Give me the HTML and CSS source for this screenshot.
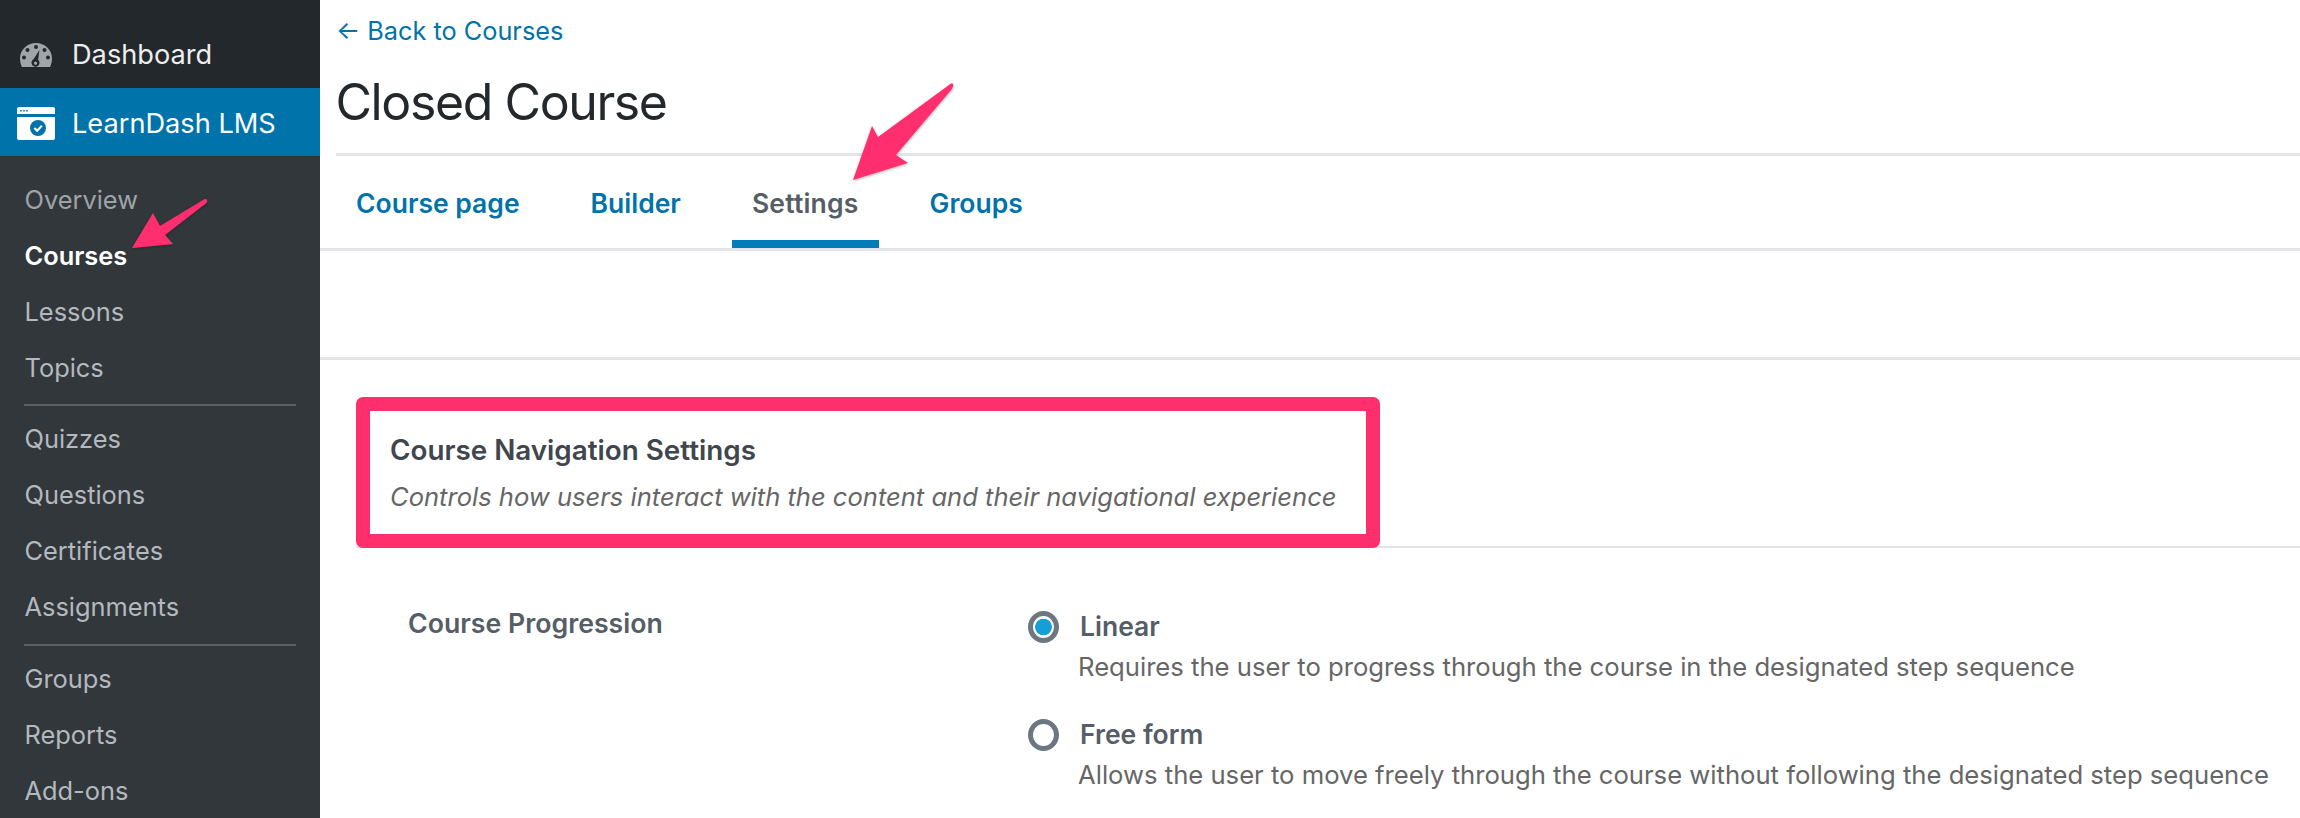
FILE: index.html
```html
<!DOCTYPE html>
<html lang="en">
<head>
<meta charset="utf-8">
<title>Closed Course</title>
<link rel="stylesheet" href="styles.css">
</head>
<body>
<div class="page">
  <aside class="sidebar">
    <a class="top-item dashboard">
      <svg class="dash-icon" viewBox="0 0 32 24"><path fill-rule="evenodd" d="M16 0C7.200 0 0 6.600 0 15.500c0 3.300.8 6.200 2 8.500h28c1.200-2.300 2-5.200 2-8.500C32 6.600 24.800 0 16 0zM16 2a2 2 0 1 1 0 4 2 2 0 0 1 0-4zM7.500 5a2 2 0 1 1 0 4 2 2 0 0 1 0-4zM24.500 5a2 2 0 1 1 0 4 2 2 0 0 1 0-4zM4 12.500a2 2 0 1 1 0 4 2 2 0 0 1 0-4zM28 12.500a2 2 0 1 1 0 4 2 2 0 0 1 0-4zM19.500 7l-1.400 9.700a4 4 0 1 1-4.600-.4zM15.500 18.500a1.600 1.600 0 1 0 .1 3.200 1.600 1.600 0 0 0-.1-3.200z"/></svg>
      <span>Dashboard</span>
    </a>
    <a class="top-item learndash">
      <svg class="ld-icon" viewBox="0 0 38 33"><path fill="#fff" d="M2 0h34a2 2 0 0 1 2 2v5H0V2a2 2 0 0 1 2-2zM0 10h38v21a2 2 0 0 1-2 2H2a2 2 0 0 1-2-2z"/><circle cx="4" cy="3.700" r=".9" fill="#0073aa"/><circle cx="7" cy="3.700" r=".9" fill="#0073aa"/><circle cx="10" cy="3.700" r=".9" fill="#0073aa"/><circle cx="21" cy="21" r="8" fill="#0073aa"/><path fill="none" stroke="#fff" stroke-width="2" d="M17.300 21l2.800 2.800 4.800-5"/></svg>
      <span>LearnDash LMS</span>
    </a>
    <nav class="submenu">
      <a class="sub-item dim">Overview</a>
      <a class="sub-item current">Courses</a>
      <a class="sub-item">Lessons</a>
      <a class="sub-item">Topics</a>
      <div class="sub-divider"></div>
      <a class="sub-item">Quizzes</a>
      <a class="sub-item">Questions</a>
      <a class="sub-item">Certificates</a>
      <a class="sub-item">Assignments</a>
      <div class="sub-divider"></div>
      <a class="sub-item">Groups</a>
      <a class="sub-item">Reports</a>
      <a class="sub-item">Add-ons</a>
    </nav>
  </aside>
  <main class="content">
    <header class="course-head">
      <a class="back-link">← Back to Courses</a>
      <h1 class="course-title">Closed Course</h1>
    </header>
    <nav class="tabs">
      <a class="tab">Course page</a>
      <a class="tab">Builder</a>
      <a class="tab active">Settings</a>
      <a class="tab">Groups</a>
    </nav>
    <div class="notice-gap"></div>
    <section class="settings">
      <div class="section-head">
        <div class="section-box">
          <h2 class="section-title">Course Navigation Settings</h2>
          <p class="section-desc">Controls how users interact with the content and their navigational experience</p>
        </div>
      </div>
      <div class="field">
        <div class="field-label">Course Progression</div>
        <div class="field-options">
          <div class="option">
            <span class="radio checked"></span>
            <div class="option-text">
              <div class="option-name">Linear</div>
              <div class="option-desc">Requires the user to progress through the course in the designated step sequence</div>
            </div>
          </div>
          <div class="option">
            <span class="radio"></span>
            <div class="option-text">
              <div class="option-name">Free form</div>
              <div class="option-desc">Allows the user to move freely through the course without following the designated step sequence</div>
            </div>
          </div>
        </div>
      </div>
    </section>
  </main>
  <svg class="annotations" viewBox="0 0 2300 818">
    <defs>
      <filter id="arrow-shadow" x="-20%" y="-20%" width="140%" height="140%"><feDropShadow dx="0" dy="1" stdDeviation="1.500" flood-color="#000" flood-opacity=".3"/></filter>
    </defs>
    <path class="arrow" filter="url(#arrow-shadow)" d="M132 248L153 213 160 226 203 200Q206 198 207 200 208 202 205 204L165 235 173 244z"/>
    <path class="arrow" filter="url(#arrow-shadow)" d="M853 180L872 126 878 137 949 85Q952 82 953 84 954 86 952 89L896 155 908 163z"/>
  </svg>
</div>
</body>
</html>
```
FILE: styles.css
```css
* { box-sizing: border-box; }
html, body { margin: 0; height: 100%; background: #fff; }
body { font-family: Inter, "Liberation Sans", sans-serif; overflow: hidden; }
a { display: block; }
.page { position: relative; display: flex; width: 2300px; height: 818px; overflow: hidden; }

.sidebar { flex: 0 0 320px; background: #32373c; color: #b4b9be; }
.top-item { display: flex; align-items: center; font-size: 27.200px; }
.top-item span { line-height: 1; }
.dashboard { height: 88px; padding: 21px 0 0 20px; background: #23282d; color: #eee; gap: 20px; }
.learndash { height: 68px; padding: 3px 0 0 17px; background: #0073aa; color: #fff; gap: 17px; }
.dash-icon { flex: none; width: 32px; height: 24px; fill: #a0a5aa; }
.ld-icon { flex: none; width: 38px; height: 33px; }
.submenu { padding-top: 15.500px; }
.sub-item { height: 56px; line-height: 56px; padding-left: 24.500px; font-size: 25.400px; color: #b4b9be; }
.sub-item.dim { color: #9ea3a8; }
.sub-item.current { color: #fff; font-weight: 600; }
.sub-divider { height: 2px; margin: 8.500px 24px 5px; background: #5c6166; }

.content { flex: 1; min-width: 0; color: #23282d; }
.course-head { margin-left: 16px; height: 156px; border-bottom: 3px solid #e2e4e7; padding-top: 16px; }
.back-link { font-size: 25.300px; line-height: 30px; color: #0073aa; }
.course-title { margin: 27px 0 0 -.5px; font-size: 50px; line-height: 58px; font-weight: 400; letter-spacing: -1.400px; color: #23282d; }
.tabs { display: flex; height: 95px; border-bottom: 3px solid #e2e4e7; padding-left: 16px; }
.tab { height: 92px; padding: 0 20px; line-height: 94px; font-size: 26.500px; font-weight: 600; color: #0073aa; margin-right: 31px; }
.tab.active { padding: 0 20px; letter-spacing: .2px; color: #555d66; border-bottom: 8px solid #007cba; }
.notice-gap { height: 109px; border-bottom: 3px solid #e2e4e7; }

.section-head { height: 188px; margin-left: 35.500px; border-bottom: 2px solid #e2e4e7; padding-top: 36.500px; }
.section-box { width: 1024.500px; height: 151px; border: 14px solid #ff2f6e; border-radius: 7px; padding: 22px 21px 0 20.500px; background: #fff; }
.section-title { margin: 0; font-size: 27.800px; line-height: 34px; font-weight: 600; color: #40464d; }
.section-desc { margin: 14px 0 0; font-size: 25.550px; line-height: 32px; font-style: italic; color: #666; }

.field { display: flex; padding: 58px 0 0 88px; }
.field-label { width: 620px; font-size: 26.700px; line-height: 34px; font-weight: 600; color: #555d66; }
.field-options { flex: 1; }
.option { display: flex; height: 108px; gap: 20px; padding-top: 4px; }
.radio { flex: none; width: 31px; height: 32px; border: 5px solid #6c7781; border-radius: 50%; margin-top: 1px; background: #fff; }
.radio.checked { background: radial-gradient(circle, #149fd6 8px, #fff 8.600px); }
.option-text { margin-left: -1px; }
.option-name { font-size: 26.500px; line-height: 32px; font-weight: 600; padding-left: 2px; color: #555d66; }
.option-desc { margin-top: 8.500px; font-size: 25.650px; line-height: 32px; color: #666; }

.annotations { position: absolute; inset: 0; width: 2300px; height: 818px; pointer-events: none; }
.arrow { fill: #ff2f6e; }
```
